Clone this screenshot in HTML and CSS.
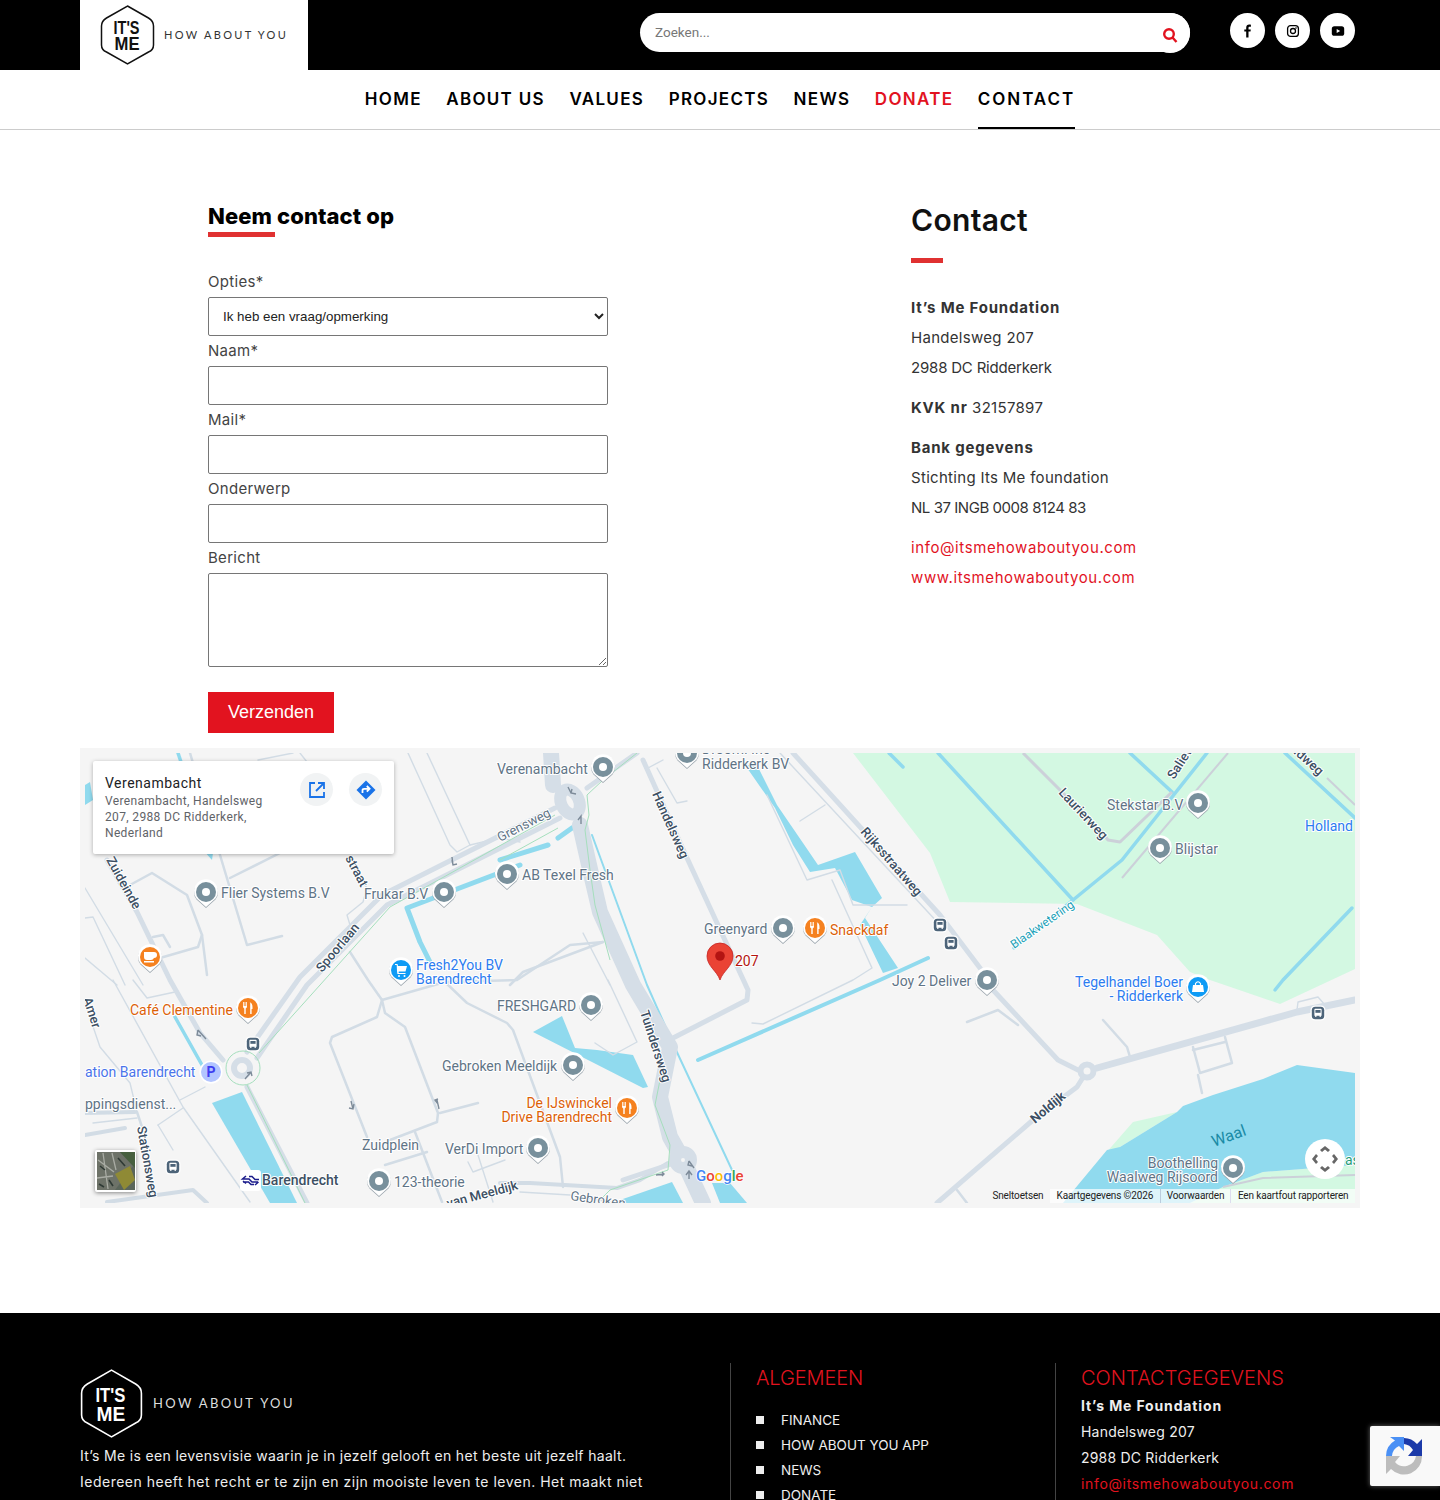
FILE: index.html
```html
<!DOCTYPE html>
<html lang="en">
<head>
    <meta charset="UTF-8">
    <meta name="viewport" content="width=device-width, initial-scale=1.0">
    <title>Contact - It's Me How About You</title>
    <link rel="stylesheet" href="styles.css">
</head>
<body>

    <header class="topbar">
        <a class="logo-box" href="#">
            <svg class="logo-mark" viewBox="0 0 54 60">
                <path class="hex" d="M27 1 L48 13 Q53 16 53 21 V40 Q53 45 48 47 L27 59 L6 47 Q1 45 1 40 V21 Q1 16 6 13 Z"/>
                <text class="logo-txt" x="13" y="29" textLength="26" lengthAdjust="spacingAndGlyphs">IT'S</text>
                <text class="logo-txt" x="14" y="45" textLength="25" lengthAdjust="spacingAndGlyphs">ME</text>
            </svg>
            <span class="logo-word">HOW ABOUT YOU</span>
        </a>
        <form class="search">
            <input type="text" placeholder="Zoeken...">
            <button type="button" aria-label="Zoeken">
                <svg viewBox="0 0 16 16" width="16" height="16"><circle cx="7" cy="7" r="4.8"/><line x1="10.5" y1="10.5" x2="14.5" y2="15"/></svg>
            </button>
        </form>
        <div class="social">
            <a href="#"><svg viewBox="0 0 14 14" width="14" height="14"><path class="solid" d="M5.2 13.5 V7.6 H3.3 V5.4 H5.2 V3.7 C5.2 1.7 6.4 .6 8.2 .6 C9 .6 9.7 .7 9.9 .7 V2.7 H8.7 C7.7 2.7 7.5 3.2 7.5 3.9 V5.4 H9.8 L9.5 7.6 H7.5 V13.5 Z"/></svg></a>
            <a href="#"><svg viewBox="0 0 14 14" width="14" height="14"><rect class="line" x="1.6" y="1.6" width="10.8" height="10.8" rx="3"/><circle class="line" cx="7" cy="7" r="2.5"/><circle class="solid" cx="10" cy="4" r=".8"/></svg></a>
            <a href="#"><svg viewBox="0 0 14 14" width="14" height="14"><rect class="solid" x=".8" y="2.2" width="12.4" height="9.6" rx="2.6"/><path class="knock" d="M5.7 5 L9.2 7 L5.7 9 Z"/></svg></a>
        </div>
    </header>

    <nav class="mainnav">
        <a href="#">HOME</a>
        <a href="#">ABOUT US</a>
        <a href="#">VALUES</a>
        <a href="#">PROJECTS</a>
        <a href="#">NEWS</a>
        <a class="red" href="#">DONATE</a>
        <a class="active" href="#">CONTACT</a>
    </nav>

    <main class="content">
        <section class="contact-row">
            <form class="contact-form">
                <h2 class="form-title">Neem contact op</h2>
                <label for="opties">Opties*</label>
                <select id="opties"><option>Ik heb een vraag/opmerking</option></select>
                <label for="naam">Naam*</label>
                <input type="text" id="naam">
                <label for="mail">Mail*</label>
                <input type="text" id="mail">
                <label for="onderwerp">Onderwerp</label>
                <input type="text" id="onderwerp">
                <label for="bericht">Bericht</label>
                <textarea id="bericht"></textarea>
                <button type="button" class="send">Verzenden</button>
            </form>
            <div class="contact-info">
                <h1>Contact</h1>
                <p><strong>It’s Me Foundation</strong><br>Handelsweg 207<br><span class="tight">2988 DC Ridderkerk</span></p>
                <p><strong>KVK nr</strong> 32157897</p>
                <p><strong>Bank gegevens</strong><br>Stichting Its Me foundation<br><span class="tighter">NL 37 INGB 0008 8124 83</span></p>
                <p><a href="#">info@itsmehowaboutyou.com</a><br><a href="#">www.itsmehowaboutyou.com</a></p>
            </div>
        </section>

        <div class="map-frame">
            <div class="map">
                <svg class="map-svg" viewBox="85 753 1270 450" width="1270" height="450">
                    <defs>
                        <g id="pin-base">
                            <path fill="#9aa5ad" d="M0 16 L-9.5 7.5 A12 12 0 1 1 9.5 7.5 Z"/>
                            <path fill="#fff" d="M0 15 L-9.5 6.5 A12 12 0 1 1 9.5 6.5 Z"/>
                        </g>
                        <g id="pin-gray"><use href="#pin-base"/><circle r="10" fill="#78909c"/><circle r="4" fill="#fff"/></g>
                        <g id="fork">
                            <path fill="#fff" d="M-5 -6 V-1.5 Q-5 0 -3.7 .5 V6 H-2.3 V.5 Q-1 0 -1 -1.5 V-6 H-1.8 V-2 H-2.6 V-6 H-3.4 V-2 H-4.2 V-6 Z M1.5 -6 Q4.5 -5 4.5 -1 V1 H3.6 V6 H2.2 V-6 Z"/>
                        </g>
                        <g id="pin-food"><use href="#pin-base"/><circle r="10" fill="#f5811f"/><use href="#fork"/></g>
                        <g id="bus">
                            <rect x="-7.5" y="-7.5" width="15" height="15" rx="4.5" fill="#fff"/>
                            <rect x="-6.2" y="-6.2" width="12.4" height="12.4" rx="3.5" fill="#4d6479"/>
                            <path fill="#fff" d="M-3.6 -3.6 Q-3.6 -4.3 -2.8 -4.3 H2.8 Q3.6 -4.3 3.6 -3.6 V2.8 H2.8 V4 H1.6 V2.8 H-1.6 V4 H-2.8 V2.8 H-3.6 Z"/>
                            <rect x="-2.6" y="-3" width="5.2" height="2.8" fill="#4d6479"/>
                        </g>
                    </defs>

                    <rect x="85" y="753" width="1270" height="450" fill="#f5f5f5"/>

                    <!-- green and water areas -->
                    <polygon class="green" points="853,753 1355,753 1355,969 1280,1004 1210,980 1190,972 1157,935 1077,904 950,902 930,853"/>
                    <polygon class="green" points="1177,1112 1133,1122 1085,1177 1120,1147"/>
                    <polygon class="green" points="1190,1203 1223,1187 1263,1172 1355,1165 1355,1203"/>
                    <polygon class="water" points="1355,1073 1297,1065 1263,1079 1213,1095 1183,1106 1177,1112 1120,1147 1107,1150 1063,1203 1190,1203 1223,1187 1263,1172 1355,1165"/>
                    <polygon class="water" points="212,1103 242,1092 297,1203 270,1203"/>
                    <polygon class="water" points="533,1032 562,1016 575,1048 597,1050 633,1055 648,1087 643,1088"/>
                    <polygon class="water" points="712,1183 730,1183 747,1203 720,1203"/>
                    <polygon class="water" points="620,1200 672,1182 683,1203 620,1203"/>
                    <polygon class="water" points="745,765 757,765 777,805 803,843 818,865 855,852 882,898 872,907 865,918 898,968 883,973 860,925 872,907 852,900 835,868 810,872 793,845 775,808"/>
                    <polygon class="water" points="85,785 90,782 93,800 85,805"/>
                    <polygon class="water" points="203,850 213,853 212,860"/>

                    <g class="canal">
                        <polyline points="938,753 1073,900"/>
                        <polyline points="1014,948 1073,900 1122,860 1207,753"/>
                        <polyline points="1130,753 1172,792"/>
                        <polyline points="1285,753 1355,818"/>
                        <polyline points="1352,908 1283,980 1275,990"/>
                        <polyline points="889,753 903,767"/>
                        <polyline class="canal-mid" points="698,1060 880,980 928,958"/>
                        <polyline points="178,753 181,762"/>
                        <polyline class="canal-wide" points="548,845 500,860"/>
                        <polyline class="canal-wide" points="520,865 407,908 420,942 430,962"/>
                        <polyline class="canal-wide" points="558,838 572,828"/>
                        <polyline points="175,1017 202,1065"/>
                        <polyline class="canal-thin" points="592,835 647,985 667,1030"/>
                        <polyline class="canal-thin" points="675,1048 732,1170"/>
                    </g>

                    <!-- roads -->
                    <g class="road-green">
                        <polyline points="1023,753 1100,830 1108,840 1120,842 1172,792"/>
                        <polyline class="thin" points="1122,878 1228,753"/>
                        <polyline class="thin" points="1327,778 1355,805"/>
                        <polyline class="thin" points="1223,1187 1263,1178 1355,1175"/>
                    </g>
                    <g class="road-minor">
                        <polyline points="190,753 220,855 247,945 282,936"/>
                        <polyline points="230,878 280,853"/>
                        <polyline points="130,885 152,873 187,895 202,935 198,947 160,958"/>
                        <polyline points="207,975 202,935"/>
                        <polyline points="153,937 163,935 170,947"/>
                        <polyline class="thin" points="85,888 143,985"/>
                        <polyline class="thin" points="85,918 93,917 125,985"/>
                        <polyline class="thin" points="85,958 117,985"/>
                        <polyline class="thin" points="408,753 450,845 457,852 470,845 500,838 520,842"/>
                        <polyline class="thin" points="427,753 470,845"/>
                        <polyline class="thin" points="258,760 293,753"/>
                        <polyline class="thin" points="300,753 307,762"/>
                        <polyline class="thin" points="347,858 367,888 363,902 347,915 350,925"/>
                        <polyline points="350,952 368,980 382,1000 445,982 517,980 570,945 603,942"/>
                        <polyline points="382,1000 377,1017 332,1037 330,1043 367,1137"/>
                        <polyline points="382,1000 385,1013 405,1027 438,1113 437,1122 390,1140"/>
                        <polyline points="440,1113 478,1103"/>
                        <polyline points="415,1132 442,1202"/>
                        <polyline points="385,1165 427,1152"/>
                        <polyline class="thin" points="468,1162 473,1172 505,1160"/>
                        <polyline class="thin" points="478,1155 493,1202"/>
                        <polyline points="445,982 467,1003 507,1023 513,1030 560,1157 563,1187"/>
                        <polyline class="thin" points="113,980 183,1107 250,1202"/>
                        <polyline class="thin" points="180,1100 205,1087"/>
                        <polyline class="thin" points="133,980 147,998 175,992"/>
                        <polyline class="wide" points="85,1113 135,1112"/>
                        <polyline class="thin" points="93,1123 137,1118"/>
                        <polyline points="137,1112 142,1127"/>
                        <polyline class="thin" points="158,1125 183,1108"/>
                        <polyline class="thin" points="158,1125 173,1150"/>
                        <polyline class="thin" points="85,1003 100,1047 130,1083 137,1112"/>
                        <polyline class="wide" points="107,1202 193,1190 207,1203"/>
                        <polyline class="wide" points="500,1183 530,1183 617,1188 640,1180 668,1163"/>
                        <polyline class="thin" points="520,1192 570,1195 610,1202"/>
                        <polyline class="thin" points="608,980 637,1042 613,1055 595,1043"/>
                        <polyline points="510,985 523,972 603,942"/>
                        <polyline class="thin" points="583,933 610,985"/>
                        <polyline class="thin" points="657,768 677,803 687,801"/>
                        <polyline class="thin" points="648,768 663,760"/>
                        <polyline class="thin" points="767,795 807,880 840,870 853,905 907,905"/>
                        <polyline class="thin" points="800,821 825,805"/>
                        <polyline class="thin" points="780,753 940,925"/>
                        <polyline class="thin" points="832,880 872,968 853,980 763,1024 752,1023"/>
                        <polyline points="967,1022 998,1010 1018,1025"/>
                        <polyline points="1103,1020 1127,1047 1130,1057"/>
                        <polyline points="1193,1047 1200,1073 1232,1063 1225,1037"/>
                        <polyline points="1193,1050 1225,1042"/>
                        <polyline points="1198,1075 1202,1093"/>
                        <polyline class="thin" points="1297,1010 1298,1002 1318,997 1325,1005"/>
                        <polyline points="957,1190 967,1203"/>
                        <polyline class="wide" points="85,1135 125,1128"/>
                    </g>
                    <g class="road-major">
                        <polyline points="793,753 940,915 980,968 993,990 1058,1060 1078,1070"/>
                        <polyline points="1087,1071 1077,1087 1033,1120 937,1203"/>
                        <polyline class="w7" points="1097,1068 1297,1012 1355,1000"/>
                        <polyline class="w14" points="551,753 553,785"/>
                        <polyline class="w14" points="580,825 592,878 600,912 633,985 670,1047 660,1097 670,1137 683,1160 703,1203"/>
                        <polyline points="587,788 637,753"/>
                        <polyline points="643,760 687,858 748,990 747,1000 673,1038"/>
                        <polyline points="560,818 387,905 307,985 257,1058"/>
                        <polyline points="555,808 382,895 300,977 247,1052"/>
                        <polyline points="247,1087 307,1203"/>
                        <polyline points="223,1060 200,1033 170,980 137,912 107,860"/>
                        <polyline points="623,1180 683,1160"/>
                    </g>
                    <circle class="rabout" cx="1087" cy="1071" r="6.5"/>
                    <circle class="rabout" cx="242" cy="1068" r="8"/>
                    <ellipse class="rabout thick" cx="570" cy="802" rx="9" ry="13" transform="rotate(-25 570 802)"/>
                    <circle class="rabout filled" cx="683" cy="1160" r="8"/>

                    <g class="path-green">
                        <polyline points="637,753 603,780 587,795 589,815 585,830 590,870 595,905 610,960"/>
                        <polyline points="500,860 558,828"/>
                        <polyline points="555,815 390,907 259,1053"/>
                        <circle cx="243" cy="1068" r="17"/>
                        <polyline points="247,1085 305,1203"/>
                        <polyline points="660,1080 655,1105 670,1145 668,1170 610,1190 600,1200"/>
                    </g>

                    <!-- one way arrows -->
                    <g class="arrow">
                        <path d="M201 1036 l-4 -1 l1 -5 M198 1030 l8 9"/>
                        <path d="M252 1076 l-1 -4 l-4 1 M251 1072 l-6 7"/>
                        <path d="M354 1104 l-1 5 l-4 -1 M353 1109 l-2 -8"/>
                        <path d="M438 1104 l-3 -4 l3 -1 M437 1100 l2 9"/>
                        <path d="M452 860 l1 5 l4 -1 M453 865 l-1 -8"/>
                        <path d="M581 821 l0 -5 l-3 4 M581 816 l0 8"/>
                        <path d="M572 789 l-1 4 l5 1 M571 793 l-3 -6"/>
                        <path d="M692 1166 l-4 -1 l1 -4 M689 1161 l5 7"/>
                        <path d="M692 1175 l-3 -4 l-3 4 M689 1171 l0 8"/>
                        <path d="M662 1172 l2 2 l-2 2 M664 1174 l-8 1"/>
                    </g>

                    <!-- pins -->
                    <use href="#pin-gray" x="603" y="767"/>
                    <use href="#pin-gray" x="687" y="753"/>
                    <use href="#pin-gray" x="206" y="892"/>
                    <use href="#pin-gray" x="444" y="892"/>
                    <use href="#pin-gray" x="507" y="874"/>
                    <use href="#pin-gray" x="783" y="928"/>
                    <use href="#pin-gray" x="987" y="980"/>
                    <use href="#pin-gray" x="1198" y="803"/>
                    <use href="#pin-gray" x="1160" y="848"/>
                    <use href="#pin-gray" x="591" y="1005"/>
                    <use href="#pin-gray" x="573" y="1065"/>
                    <use href="#pin-gray" x="538" y="1148"/>
                    <use href="#pin-gray" x="379" y="1181"/>
                    <use href="#pin-gray" x="1233" y="1168"/>

                    <use href="#pin-base" x="150" y="957"/>
                    <circle cx="150" cy="957" r="10" fill="#f5811f"/>
                    <path fill="#fff" d="M144 952 H154 Q157 952 157 955 Q157 958 154 958 Q153 960 151 960 H147 Q144 960 144 957 Z M144 961 H154 V962.5 H144 Z"/>
                    <use href="#pin-food" x="248" y="1008"/>
                    <use href="#pin-food" x="815" y="928"/>
                    <use href="#pin-food" x="627" y="1108"/>

                    <use href="#pin-base" x="401" y="970"/>
                    <circle cx="401" cy="970" r="10" fill="#0f9bf5"/>
                    <path fill="#fff" d="M395 964 H397.5 L398 966 H407 L405.5 971.5 H398.8 L398.6 973 H405.5 V974 H397.4 L397 971 L396.7 965 H395 Z"/>
                    <circle cx="399" cy="976" r="1" fill="#fff"/><circle cx="404.5" cy="976" r="1" fill="#fff"/>
                    <use href="#pin-base" x="1198" y="987"/>
                    <circle cx="1198" cy="987" r="10" fill="#0f9bf5"/>
                    <path fill="#fff" d="M1193 985 H1203 L1204 992 H1192 Z"/>
                    <path fill="none" stroke="#fff" stroke-width="1.2" d="M1195.5 986 V983.5 Q1198 980 1200.5 983.5 V986"/>

                    <circle cx="211" cy="1072" r="11.5" fill="#fff"/>
                    <circle cx="211" cy="1072" r="10" fill="#b3c5ff"/>
                    <text class="m-park" x="211" y="1077" text-anchor="middle">P</text>

                    <use href="#bus" x="253" y="1044"/>
                    <use href="#bus" x="173" y="1167"/>
                    <use href="#bus" x="940" y="925"/>
                    <use href="#bus" x="951" y="943"/>
                    <use href="#bus" x="1318" y="1013"/>

                    <rect x="240" y="1170" width="21" height="21" rx="3" fill="#fff"/>
                    <path fill="none" stroke="#1c1d8c" stroke-width="1.5" d="M246 1176 L242.5 1179 H249 L252 1182 H258 M255 1185 L258.5 1182 M246 1183.5 L243 1181 M243 1182 H248.5 L251 1184.5 H254 M249 1176.5 H252 L255 1179.5 H259"/>

                    <!-- red marker -->
                    <path fill="#ea4335" stroke="#c5221f" stroke-width=".8" d="M720 980 C717 971 707 966 707 956 A13 13 0 0 1 733 956 C733 966 723 971 720 980 Z"/>
                    <circle cx="720" cy="956" r="4.8" fill="#b31412"/>
                    <text class="m-label m-marker" x="735" y="966">207</text>

                    <!-- poi labels -->
                    <g class="m-label m-gray">
                        <text x="497" y="774">Verenambacht</text>
                        <text x="702" y="754">Droom! Inc</text>
                        <text x="702" y="769">Ridderkerk BV</text>
                        <text x="221" y="898">Flier Systems B.V</text>
                        <text x="364" y="899">Frukar B.V</text>
                        <text x="522" y="880">AB Texel Fresh</text>
                        <text x="704" y="934">Greenyard</text>
                        <text x="892" y="986">Joy 2 Deliver</text>
                        <text x="1107" y="810">Stekstar B.V</text>
                        <text x="1175" y="854">Blijstar</text>
                        <text x="497" y="1011">FRESHGARD</text>
                        <text x="442" y="1071">Gebroken Meeldijk</text>
                        <text x="445" y="1154">VerDi Import</text>
                        <text x="362" y="1150">Zuidplein</text>
                        <text x="394" y="1187">123-theorie</text>
                        <text x="85" y="1109">ppingsdienst...</text>
                        <text x="1218" y="1168" text-anchor="end">Boothelling</text>
                        <text x="1218" y="1182" text-anchor="end">Waalweg Rijsoord</text>
                    </g>
                    <g class="m-label m-orange">
                        <text x="130" y="1015">Café Clementine</text>
                        <text x="830" y="935">Snackdaf</text>
                        <text x="612" y="1108" text-anchor="end">De IJswinckel</text>
                        <text x="612" y="1122" text-anchor="end">Drive Barendrecht</text>
                    </g>
                    <g class="m-label m-blue">
                        <text x="416" y="970">Fresh2You BV</text>
                        <text x="416" y="984">Barendrecht</text>
                        <text x="1183" y="987" text-anchor="end">Tegelhandel Boer</text>
                        <text x="1183" y="1001" text-anchor="end">- Ridderkerk</text>
                        <text x="1353" y="831" text-anchor="end">Holland</text>
                    </g>
                    <text class="m-label m-park-label" x="85" y="1077">ation Barendrecht</text>
                    <text class="m-label m-station" x="262" y="1185">Barendrecht</text>

                    <!-- road labels -->
                    <g class="m-label m-road">
                        <text transform="translate(106 860) rotate(61)">Zuideinde</text>
                        <text transform="translate(652 794) rotate(66)">Handelsweg</text>
                        <text transform="translate(860 832) rotate(49)">Rijksstraatweg</text>
                        <text transform="translate(1058 793) rotate(47)">Laurierweg</text>
                        <text transform="translate(322 973) rotate(-50)">Spoorlaan</text>
                        <text transform="translate(500 842) rotate(-27)" class="m-road-light">Grensweg</text>
                        <text transform="translate(640 1012) rotate(72)">Tuindersweg</text>
                        <text transform="translate(137 1127) rotate(80)">Stationsweg</text>
                        <text transform="translate(345 858) rotate(62)">straat</text>
                        <text transform="translate(1174 780) rotate(-57)">Salieweg</text>
                        <text transform="translate(1293 753) rotate(42)">idweg</text>
                        <text transform="translate(83 999) rotate(72)">Amer</text>
                        <text transform="translate(448 1208) rotate(-15)">van Meeldijk</text>
                        <text transform="translate(570 1200) rotate(8)" class="m-road-light">Gebroken</text>
                        <text transform="translate(1035 1124) rotate(-40)" class="m-bold">Noldijk</text>
                    </g>
                    <text class="m-label m-water-sm" transform="translate(1014 949) rotate(-35)">Blaakwetering</text>
                    <text class="m-label m-water-lg" transform="translate(1214 1147) rotate(-20)">Waal</text>
                    <text class="m-label m-park-green" x="1345" y="1165">as</text>

                    <!-- google logo -->
                    <text class="m-google" x="696" y="1181"><tspan fill="#4285f4">G</tspan><tspan fill="#ea4335">o</tspan><tspan fill="#fbbc04">o</tspan><tspan fill="#4285f4">g</tspan><tspan fill="#34a853">l</tspan><tspan fill="#ea4335">e</tspan></text>

                    <!-- imagery thumbnail -->
                    <rect class="thumb" x="95" y="1150" width="41" height="42" rx="2" fill="#fff"/>
                    <rect x="97" y="1152" width="38" height="38" fill="#5a655a"/>
                    <polygon points="97,1152 120,1152 133,1166 115,1190 97,1190" fill="#6d7268"/>
                    <polygon points="115,1174 130,1166 135,1180 124,1190" fill="#8f8a35"/>
                    <polygon points="120,1152 135,1152 135,1168" fill="#47603f"/>
                    <path d="M98 1160 L114 1172 M103 1153 L108 1189 M97 1178 L113 1176 M112 1153 L116 1170" stroke="#a9aca4" stroke-width="1.3" fill="none"/>
                    <path d="M100 1166 L105 1170 M109 1180 L113 1186 M99 1184 L104 1187 M118 1158 L125 1166" stroke="#2f3a35" stroke-width="1.6" fill="none"/>

                    <!-- compass -->
                    <circle cx="1325" cy="1159" r="20" fill="#fff"/>
                    <g class="compass">
                        <path d="M1320 1150 L1325 1146 L1330 1150 L1328 1152 L1325 1149.5 L1322 1152 Z"/>
                        <path d="M1320 1168 L1325 1172 L1330 1168 L1328 1166 L1325 1168.5 L1322 1166 Z"/>
                        <path d="M1316 1154 L1312 1159 L1316 1164 L1318 1162 L1315.5 1159 L1318 1156 Z"/>
                        <path d="M1334 1154 L1338 1159 L1334 1164 L1332 1162 L1334.5 1159 L1332 1156 Z"/>
                    </g>
                </svg>

                <div class="map-card">
                    <div class="map-card-text">
                        <div class="map-card-title">Verenambacht</div>
                        <div class="map-card-addr">Verenambacht, Handelsweg 207, 2988 DC Ridderkerk, Nederland</div>
                    </div>
                    <div class="map-card-btn">
                        <svg viewBox="0 0 18 18" width="18" height="18"><path fill="none" stroke="#1a73e8" stroke-width="1.8" d="M7 2 H2 V16 H16 V11 M10 2 H16 V8 M16 2 L8 10"/></svg>
                    </div>
                    <div class="map-card-btn">
                        <svg viewBox="0 0 20 20" width="20" height="20"><path fill="#1a73e8" d="M10 .5 L19.5 10 L10 19.5 L.5 10 Z"/><path fill="none" stroke="#fff" stroke-width="1.8" d="M6.5 13 V10.5 Q6.5 8.8 8.2 8.8 H13 M10.8 6 L13.6 8.8 L10.8 11.6"/></svg>
                    </div>
                </div>

                <div class="map-attr">
                    <span class="plain">Sneltoetsen</span>
                    <div class="map-attr-bar">
                        <span>Kaartgegevens ©2026</span>
                        <span class="sep">Voorwaarden</span>
                        <span>Een kaartfout rapporteren</span>
                    </div>
                </div>
            </div>
        </div>
    </main>

    <footer class="footer">
        <div class="foot-about">
            <div class="foot-logo">
                <svg class="foot-mark" viewBox="0 0 54 60">
                    <path class="hex-white" d="M27 1 L48 13 Q53 16 53 21 V40 Q53 45 48 47 L27 59 L6 47 Q1 45 1 40 V21 Q1 16 6 13 Z"/>
                    <text class="logo-txt-white" x="13" y="29" textLength="26" lengthAdjust="spacingAndGlyphs">IT'S</text>
                    <text class="logo-txt-white" x="14" y="45" textLength="25" lengthAdjust="spacingAndGlyphs">ME</text>
                </svg>
                <span class="foot-word">HOW ABOUT YOU</span>
            </div>
            <p>It’s Me is een levensvisie waarin je in jezelf gelooft en het beste uit jezelf haalt.<br><span class="wider">Iedereen heeft het recht er te zijn en zijn mooiste leven te leven. Het maakt niet</span></p>
        </div>
        <div class="foot-col">
            <h3>ALGEMEEN</h3>
            <ul>
                <li>FINANCE</li>
                <li>HOW ABOUT YOU APP</li>
                <li>NEWS</li>
                <li>DONATE</li>
            </ul>
        </div>
        <div class="foot-col foot-contact">
            <h3>CONTACTGEGEVENS</h3>
            <p><strong>It’s Me Foundation</strong><br>Handelsweg 207<br>2988 DC Ridderkerk<br><a href="#">info@itsmehowaboutyou.com</a></p>
        </div>
    </footer>

    <div class="recaptcha">
        <svg viewBox="0 0 40 40" width="40" height="40">
            <path fill="#4a90f5" d="M2 20 A18 18 0 0 1 11 4.5 L6 1 H20 V15 L15 10 A12 12 0 0 0 8 20 Z"/>
            <path fill="#1c3aa9" d="M20 2 A18 18 0 0 1 33 8 L38 3 V20 H24 L29 14 A12 12 0 0 0 20 8 Z"/>
            <path fill="#bdbdbd" d="M2 20 H16 L11 26 A12 12 0 0 0 32 20 H38 A18 18 0 0 1 7 33 L2 38 Z"/>
        </svg>
    </div>

</body>
</html>
```

FILE: styles.css
```css
* {
    box-sizing: border-box;
}

html, body {
    margin: 0;
    padding: 0;
}

body {
    font-family: 'Inter', sans-serif;
    font-size: 15px;
    color: #333;
    background-color: #fff;
    height: 1500px;
    overflow: hidden;
}

a {
    text-decoration: none;
    color: inherit;
}

/* top bar */
.topbar {
    height: 70px;
    background-color: #000;
    padding: 0 80px;
    display: flex;
    align-items: flex-start;
}

.logo-box {
    width: 228px;
    height: 70px;
    background-color: #fff;
    display: flex;
    align-items: center;
    padding-left: 20px;
    gap: 9px;
}

.logo-mark {
    width: 55px;
    height: 60px;
}

.hex {
    fill: none;
    stroke: #111;
    stroke-width: 1.5;
}

.logo-txt {
    font-family: 'Liberation Sans', sans-serif;
    font-weight: 700;
    font-size: 18px;
    fill: #111;
}

.logo-word {
    font-family: 'Lato', sans-serif;
    font-size: 11px;
    letter-spacing: 2.3px;
    margin-bottom: 2px;
    color: #333;
    white-space: nowrap;
}

.search {
    width: 550px;
    height: 40px;
    margin: 13px 0 0 332px;
    position: relative;
}

.search input {
    width: 100%;
    height: 39px;
    border: none;
    border-radius: 20px;
    background-color: #fff;
    padding: 0 50px 1px 15px;
    font-family: 'Roboto', sans-serif;
    font-size: 13.5px;
}

.search input::placeholder {
    color: #777;
}

.search button {
    position: absolute;
    right: 0;
    top: 0;
    width: 40px;
    height: 40px;
    border: none;
    border-radius: 50%;
    background-color: #fff;
    padding: 6px 0 0 0;
}

.search svg {
    fill: none;
    stroke: #e2131f;
    stroke-width: 2.4;
}

.social {
    display: flex;
    gap: 10px;
    margin: 13px 0 0 40px;
}

.social a {
    width: 35px;
    height: 35px;
    border-radius: 50%;
    background-color: #fff;
    display: flex;
    align-items: center;
    justify-content: center;
}

.social .solid {
    fill: #000;
}

.social .line {
    fill: none;
    stroke: #000;
    stroke-width: 1.3;
}

.social .knock {
    fill: #fff;
}

/* main navigation */
.mainnav {
    height: 60px;
    border-bottom: 1px solid #ccc;
    display: flex;
    justify-content: center;
    gap: 24.5px;
}

.mainnav a {
    font-size: 17px;
    font-weight: 600;
    line-height: 58px;
    height: 59px;
    letter-spacing: 1.3px;
    color: #000;
}

.mainnav .red {
    color: #e2131f;
}

.mainnav .active {
    border-bottom: 2px solid #000;
    letter-spacing: 1.95px;
}

/* contact section */
.content {
    padding: 72px 80px 0;
}

.contact-row {
    display: flex;
    padding-left: 128px;
}

.contact-form {
    width: 400px;
}

.form-title {
    margin: 0 0 30px;
    font-size: 22px;
    line-height: 28px;
    font-weight: 800;
    letter-spacing: .1px;
    color: #000;
}

.form-title::after {
    content: "";
    display: block;
    width: 67px;
    height: 5px;
    margin-top: 2px;
    background-color: #e03131;
}

.contact-form label {
    display: block;
    line-height: 30px;
    letter-spacing: .3px;
    color: #444;
}

.contact-form select,
.contact-form input,
.contact-form textarea {
    display: block;
    width: 100%;
    height: 39px;
    border: 1px solid #767676;
    border-radius: 2px;
    background-color: #fff;
    font-family: 'Liberation Sans', sans-serif;
    font-size: 13.33px;
    color: #222;
}

.contact-form select {
    padding-left: 10px;
}

.contact-form textarea {
    height: 94px;
}

.send {
    display: block;
    margin-top: 25px;
    width: 126px;
    height: 41px;
    border: none;
    background-color: #e2131f;
    color: #fff;
    font-family: 'Liberation Sans', sans-serif;
    font-size: 18px;
}

.contact-info {
    margin-left: 303px;
}

.contact-info h1 {
    margin: 0;
    font-size: 30px;
    line-height: 36px;
    font-weight: 600;
    letter-spacing: .3px;
    color: #111;
}

.contact-info h1::after {
    content: "";
    display: block;
    width: 32px;
    height: 5px;
    margin: 20px 0 30px;
    background-color: #e03131;
}

.contact-info p {
    margin: 0 0 10px;
    line-height: 30px;
    letter-spacing: .3px;
}

.contact-info strong {
    letter-spacing: .8px;
}

.contact-info a {
    color: #e2131f;
    letter-spacing: .6px;
}

.contact-info .tight {
    letter-spacing: -.2px;
}

.contact-info .tighter {
    letter-spacing: -.45px;
}

/* map */
.map-frame {
    margin-top: 15px;
    padding: 5px;
    height: 460px;
    background-color: #f5f5f5;
}

.map {
    position: relative;
    width: 1270px;
    height: 450px;
    overflow: hidden;
}

.map-svg {
    display: block;
}

.green {
    fill: #d3f8e2;
}

.water {
    fill: #90daee;
}

.canal polyline {
    fill: none;
    stroke: #90daee;
    stroke-width: 3.5;
    stroke-linecap: round;
    stroke-linejoin: round;
}

.canal .canal-wide {
    stroke-width: 5;
}

.canal .canal-mid {
    stroke-width: 4;
}

.canal .canal-thin {
    stroke-width: 2;
}

.road-green polyline {
    fill: none;
    stroke: #ccd0d9;
    stroke-width: 3;
    stroke-linejoin: round;
}

.road-green .thin {
    stroke-width: 2;
}

.road-minor polyline {
    fill: none;
    stroke: #d2dce5;
    stroke-width: 2.5;
    stroke-linejoin: round;
    stroke-linecap: round;
}

.road-minor .thin {
    stroke-width: 1.4;
}

.road-minor .wide {
    stroke-width: 4;
}

.road-major polyline {
    fill: none;
    stroke: #d5dee7;
    stroke-width: 5;
    stroke-linejoin: round;
    stroke-linecap: round;
}

.road-major .w7 {
    stroke-width: 7;
}

.road-major .w14 {
    stroke-width: 16;
}

.rabout {
    fill: #f5f5f5;
    stroke: #d5dee7;
    stroke-width: 6;
}

.rabout.thick {
    stroke-width: 12;
}

.rabout.filled {
    stroke-width: 12;
}

.path-green polyline,
.path-green circle {
    fill: none;
    stroke: #a5dfbd;
    stroke-width: 1;
}

.arrow path {
    fill: none;
    stroke: #7d8b99;
    stroke-width: 1.4;
}

.thumb {
    filter: drop-shadow(0 1px 2px rgba(0, 0, 0, .45));
}

.m-label {
    font-family: 'Roboto', sans-serif;
    font-size: 14px;
    paint-order: stroke;
    stroke: #fff;
    stroke-width: 2px;
    stroke-linejoin: round;
}

.m-gray {
    fill: #5f7486;
}

.m-orange {
    fill: #dc6108;
}

.m-blue {
    fill: #2c7cf0;
}

.m-park-label {
    fill: #4a74ea;
}

.m-station {
    fill: #3c4f63;
    font-weight: 500;
}

.m-marker {
    fill: #b3140f;
}

.m-road {
    fill: #3c4f63;
    font-size: 13px;
    font-weight: 500;
}

.m-road-light {
    fill: #5f7486;
    font-weight: 400;
}

.m-bold {
    font-weight: 700;
}

.m-water-sm {
    fill: #1b9fb8;
    font-size: 11.8px;
}

.m-water-lg {
    fill: #1a8aa5;
    font-size: 16px;
    stroke-width: 0;
}

.m-park-green {
    fill: #1f9d7a;
}

.m-park {
    font-family: 'Roboto', sans-serif;
    font-size: 14px;
    font-weight: 700;
    fill: #3d3df0;
}

.m-google {
    font-family: 'Roboto', sans-serif;
    font-size: 15px;
    font-weight: 500;
    paint-order: stroke;
    stroke: #fff;
    stroke-width: 1.5px;
}

.compass path {
    fill: #666;
}

.map-card {
    position: absolute;
    left: 8px;
    top: 8px;
    width: 301px;
    height: 93px;
    background-color: #fff;
    border-radius: 2px;
    box-shadow: 0 1px 4px rgba(0, 0, 0, .3);
    padding: 12px 12px 0;
    display: flex;
    font-family: 'Roboto', sans-serif;
}

.map-card-text {
    width: 163px;
    margin-right: 32px;
}

.map-card-title {
    font-size: 14px;
    font-weight: 400;
    line-height: 20px;
    letter-spacing: .5px;
    color: #202124;
}

.map-card-addr {
    font-size: 12px;
    line-height: 16px;
    letter-spacing: .35px;
    color: #5f6368;
}

.map-card-btn {
    width: 33px;
    height: 33px;
    margin-right: 16px;
    flex-shrink: 0;
    border-radius: 50%;
    background-color: #f1f3f4;
    display: flex;
    align-items: center;
    justify-content: center;
}

.map-card-btn:last-child {
    margin-right: 0;
}

.map-attr {
    position: absolute;
    right: 0;
    bottom: 0;
    height: 14px;
    display: flex;
    font-family: 'Roboto', sans-serif;
    font-size: 10px;
    line-height: 14px;
    letter-spacing: -.14px;
    color: #222;
}

.map-attr .plain {
    margin-right: 6.5px;
}

.map-attr-bar {
    display: flex;
    background-color: rgba(255, 255, 255, .7);
}

.map-attr-bar span {
    padding: 0 6.5px;
}

.map-attr-bar .sep {
    border-left: 1px solid #bcd;
    border-right: 1px solid #dde;
    padding: 0 6px;
}

/* footer */
.footer {
    margin-top: 105px;
    height: 187px;
    overflow: hidden;
    background-color: #000;
    color: #eee;
    padding: 50px 80px 0;
    display: flex;
    align-items: flex-start;
}

.foot-about {
    width: 650px;
    font-size: 14px;
    padding-top: 6px;
}

.foot-logo {
    display: flex;
    align-items: center;
    gap: 10px;
}

.foot-mark {
    width: 63px;
    height: 69px;
}

.hex-white {
    fill: none;
    stroke: #fff;
    stroke-width: 1.4;
}

.logo-txt-white {
    font-family: 'Liberation Sans', sans-serif;
    font-weight: 700;
    font-size: 18px;
    fill: #fff;
}

.foot-word {
    font-family: 'Lato', sans-serif;
    font-size: 13px;
    letter-spacing: 2.35px;
    margin-bottom: 2px;
    color: #ddd;
    white-space: nowrap;
}

.foot-about p {
    margin: 5px 0 0;
    line-height: 26px;
    letter-spacing: .33px;
    white-space: nowrap;
}

.foot-about .wider {
    letter-spacing: .5px;
}

.foot-col {
    width: 325px;
    height: 200px;
    border-left: 1px solid #444;
    padding-left: 25px;
    font-size: 13.5px;
}

.foot-contact {
    width: 305px;
    font-size: 14px;
}

.foot-col h3 {
    margin: 0;
    font-size: 20px;
    line-height: 30px;
    font-weight: 300;
    letter-spacing: -.1px;
    color: #e2131f;
}

.foot-contact h3 {
    letter-spacing: .05px;
}

.foot-col ul {
    list-style: none;
    margin: 15px 0 0;
    padding: 0;
}

.foot-col li {
    line-height: 25px;
    padding-left: 25px;
    position: relative;
}

.foot-col li::before {
    content: "";
    position: absolute;
    left: 0;
    top: 8px;
    width: 8px;
    height: 8px;
    background-color: #eee;
}

.foot-col p {
    margin: 0;
    line-height: 26px;
    letter-spacing: .2px;
}

.foot-col strong {
    letter-spacing: .85px;
}

.foot-col a {
    color: #e2131f;
    letter-spacing: .65px;
}

.recaptcha {
    position: fixed;
    right: 0;
    bottom: 14px;
    width: 70px;
    height: 60px;
    background-color: #f9f9f9;
    border-radius: 2px 0 0 2px;
    box-shadow: 0 0 5px rgba(128, 128, 128, .8);
    padding: 10px 0 0 14px;
}
```
